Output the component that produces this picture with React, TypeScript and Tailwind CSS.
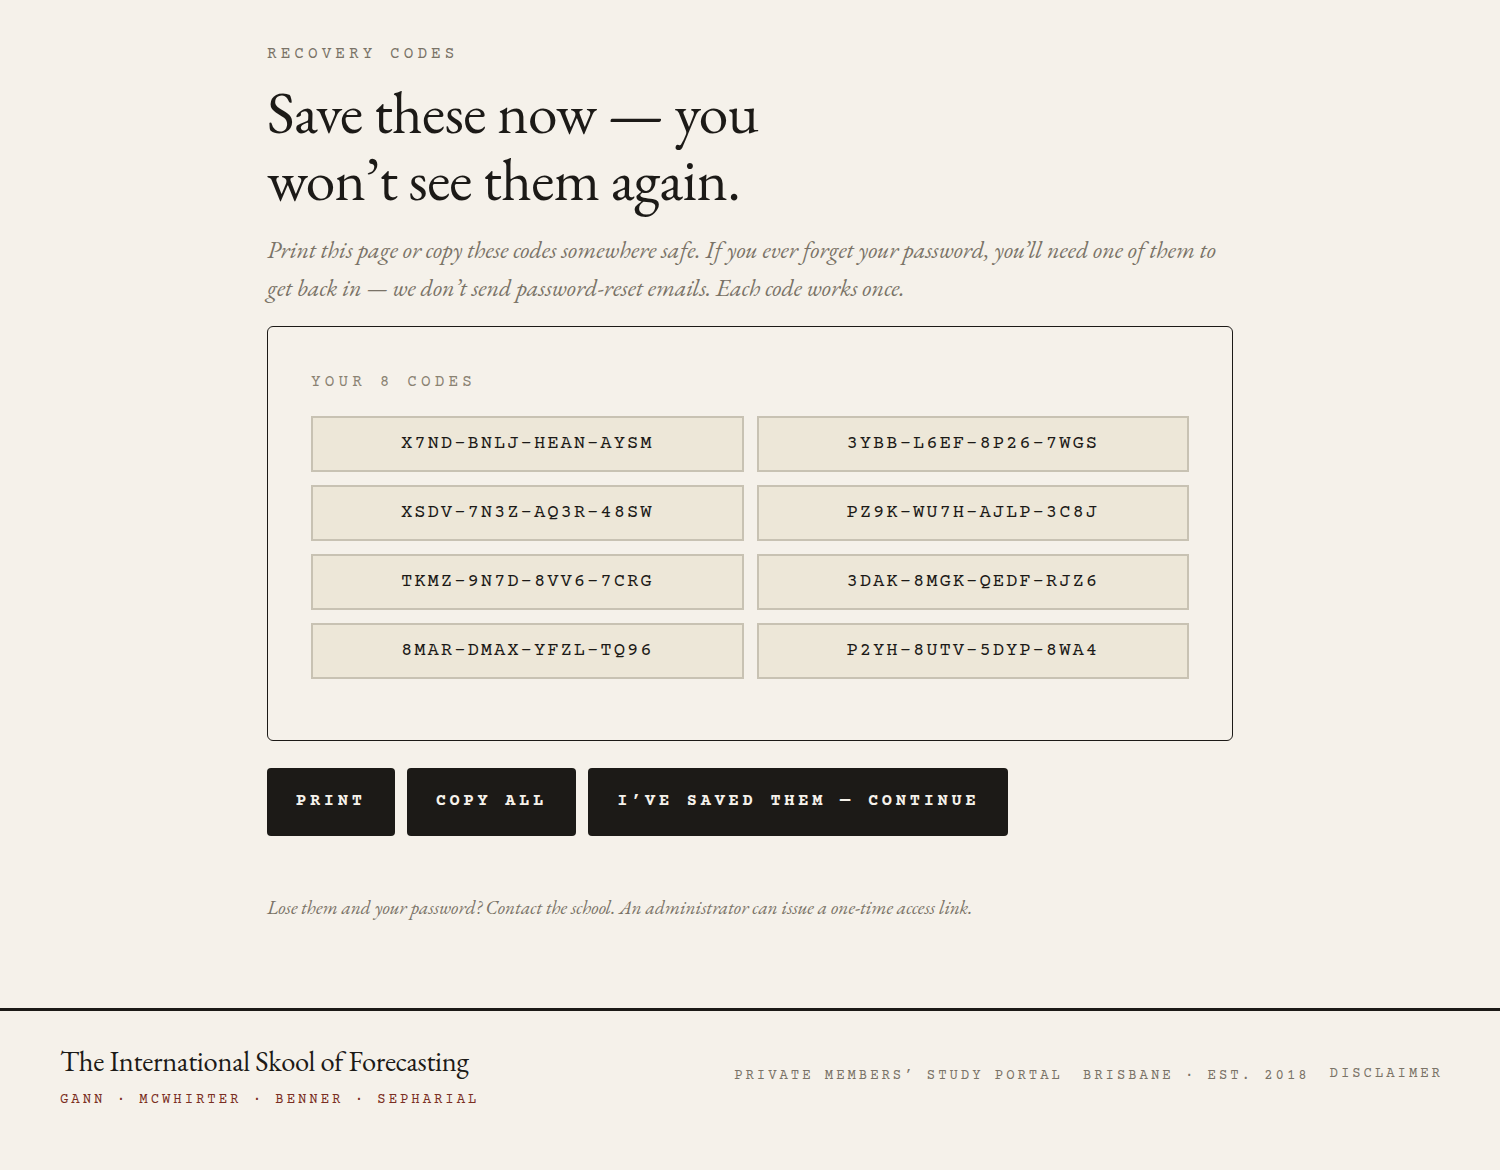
import React from "react";

const serif = "font-['EB_Garamond','Liberation_Serif','Times_New_Roman',serif]";
const mono = "font-['Courier_Prime','Nimbus_Mono_PS','Nimbus_Mono_L','FreeMono','Courier_10_Pitch','Courier',monospace]";

const codes = [
  "X7ND-BNLJ-HEAN-AYSM",
  "3YBB-L6EF-8P26-7WGS",
  "XSDV-7N3Z-AQ3R-48SW",
  "PZ9K-WU7H-AJLP-3C8J",
  "TKMZ-9N7D-8VV6-7CRG",
  "3DAK-8MGK-QEDF-RJZ6",
  "8MAR-DMAX-YFZL-TQ96",
  "P2YH-8UTV-5DYP-8WA4",
];

export default function App() {
  return (
    <div className="min-h-[1170px] bg-[#f5f1ea] text-[#1c1a17] flex flex-col">
      <main className="w-[966px] mx-auto pt-[44px] pb-[88px]">
        <div className={`${mono} text-[16px] tracking-[0.255em] text-[#7a7367] leading-[20px]`}>
          RECOVERY CODES
        </div>
        <h1 className={`${serif} text-[59.5px] leading-[67px] mt-[15px] text-[#1c1a17] tracking-[-0.01em]`}>
          Save these now — you
          <br />
          won’t see them again.
        </h1>
        <p className={`${serif} italic text-[24px] leading-[37.5px] text-[#7a7367] mt-[18px] whitespace-nowrap`}>
          Print this page or copy these codes somewhere safe. If you ever forget your password, you’ll need one of them to
          <br />
          get back in — we don’t send password-reset emails. Each code works once.
        </p>
        <section className="mt-[20px] border-[1.5px] border-[#1c1a17] rounded-[6px] px-[43px] pt-[45px] pb-[61px]">
          <div className={`${mono} text-[16px] tracking-[0.26em] text-[#8a8272] leading-[20px]`}>
            YOUR 8 CODES
          </div>
          <div className="grid grid-cols-2 gap-x-[13px] gap-y-[13px] mt-[24px]">
            {codes.map((c) => (
              <div
                key={c}
                className={`${mono} h-[56px] flex items-center justify-center bg-[#ede7d8] border-2 border-[#c8c2b3] text-[19px] tracking-[0.1em] text-[#1c1a17] pt-[1px]`}
              >
                {c}
              </div>
            ))}
          </div>
        </section>
        <div className="flex gap-[12px] mt-[27px]">
          {["PRINT", "COPY ALL", "I’VE SAVED THEM — CONTINUE"].map((b) => (
            <button
              key={b}
              className={`${mono} h-[68px] px-[29px] bg-[#1c1a17] text-[#f5f1ea] rounded-[4px] text-[17px] font-bold tracking-[0.22em] whitespace-nowrap`}
            >
              {b}
            </button>
          ))}
        </div>
        <p className={`${serif} italic text-[19.3px] leading-[24px] text-[#7a7367] mt-[60px]`}>
          Lose them and your password? Contact the school. An administrator can issue a one-time access link.
        </p>
      </main>
      <footer className="border-t-[3px] border-[#1c1a17] px-[60px] pt-[33px] pb-[60px] flex items-start justify-between flex-1">
        <div>
          <div className={`${serif} text-[28.5px] leading-[34px] text-[#1c1a17] tracking-[-0.01em]`}>
            The International Skool of Forecasting
          </div>
          <div className={`${mono} text-[14px] tracking-[0.21em] text-[#7a2e22] mt-[14px] leading-[16px]`}>
            GANN · MCWHIRTER · BENNER · SEPHARIAL
          </div>
        </div>
        <div className={`${mono} flex items-start gap-[20px] text-[14px] tracking-[0.21em] text-[#7a7367] pt-[22px] leading-[16px]`}>
          <span className="mt-[2px]">PRIVATE MEMBERS’ STUDY PORTAL</span>
          <span className="mt-[2px]">BRISBANE · EST. 2018</span>
          <span className="-mr-[0.21em]">DISCLAIMER</span>
        </div>
      </footer>
    </div>
  );
}
